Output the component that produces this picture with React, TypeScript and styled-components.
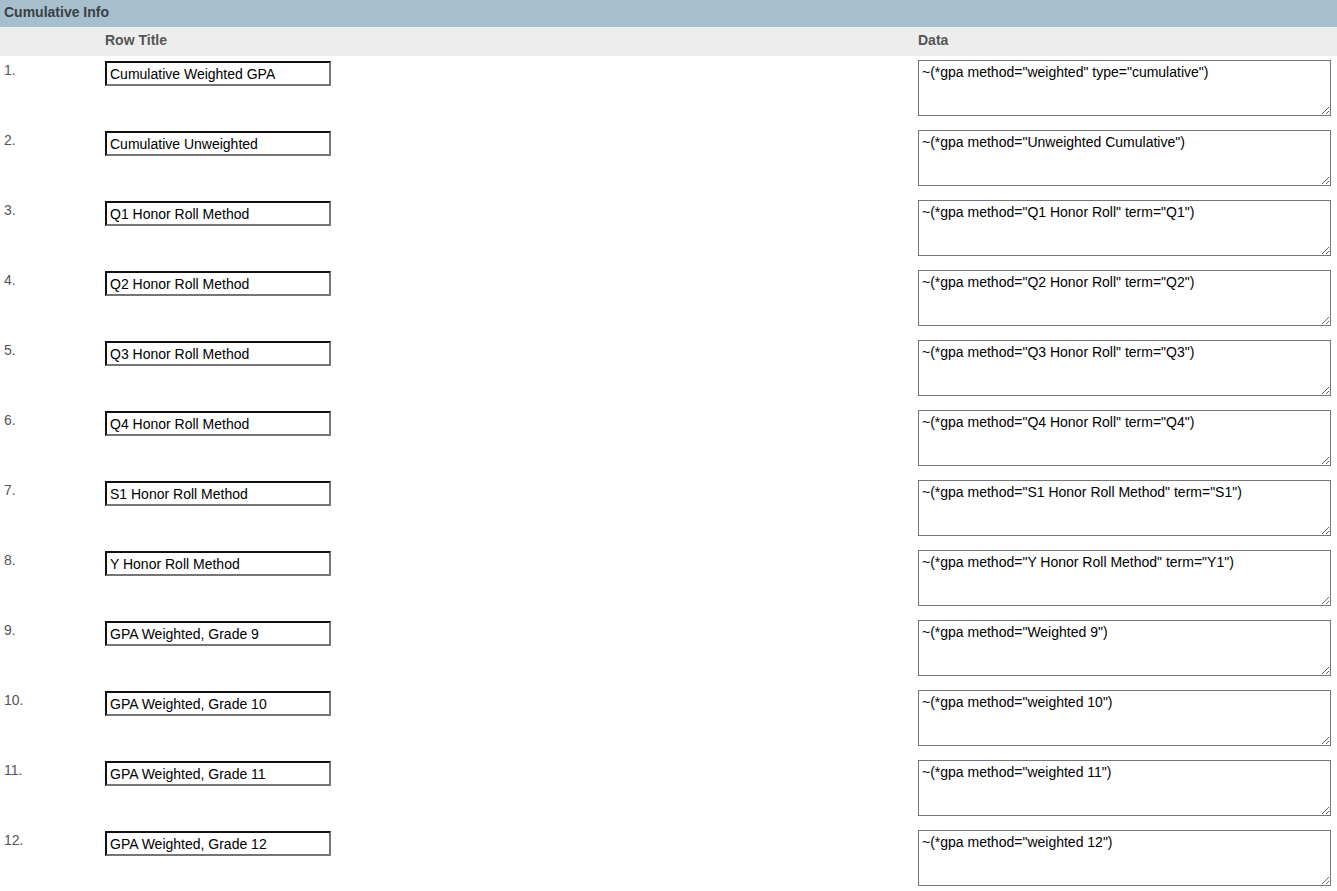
import React from "react";
import styled, { createGlobalStyle } from "styled-components";

const Global = createGlobalStyle`
  html, body { margin: 0; padding: 0; background: #fff; }
  body { font-family: Arial, "Liberation Sans", Helvetica, sans-serif; font-size: 14px; color: #333; }
`;

const Section = styled.section`
  width: 1337px;
`;

const TitleBar = styled.div`
  height: 27px;
  box-sizing: border-box;
  padding: 4px 4px 0;
  background: #a7bfcc;
  font-weight: bold;
  font-size: 14px;
  line-height: 17px;
  color: #3a3f44;
`;

const Grid = styled.div`
  display: grid;
  grid-template-columns: 105px 813px 1fr;
`;

const HeadCell = styled.div`
  height: 29px;
  background: #ededed;
  font-weight: bold;
  font-size: 14px;
  line-height: 27px;
  color: #555;
`;

const NumCell = styled.div`
  height: 70px;
  box-sizing: border-box;
  padding: 6px 0 0 4px;
  font-size: 14px;
  line-height: 16px;
  color: #555;
`;

const Cell = styled.div`
  height: 70px;
  box-sizing: border-box;
  padding-top: 4px;
`;

const TitleInput = styled.input`
  display: block;
  margin: 1px 0 0;
  width: 226px;
  height: 25px;
  box-sizing: border-box;
  padding: 0 3px;
  border-width: 2px;
  border-style: solid;
  border-color: #111 #767676 #767676 #111;
  font-family: Arial, "Liberation Sans", Helvetica, sans-serif;
  font-size: 14px;
  color: #000;
  background: #fff;
  outline: none;
`;

const DataArea = styled.textarea`
  display: block;
  margin: 0;
  width: 413px;
  height: 56px;
  box-sizing: border-box;
  padding: 3px 3px 2px;
  border: 1px solid #767676;
  font-family: Arial, "Liberation Sans", Helvetica, sans-serif;
  font-size: 14px;
  line-height: 16px;
  color: #000;
  background: #fff;
  outline: none;
`;

const rows: [string, string][] = [
  ["Cumulative Weighted GPA", '~(*gpa method="weighted" type="cumulative")'],
  ["Cumulative Unweighted", '~(*gpa method="Unweighted Cumulative")'],
  ["Q1 Honor Roll Method", '~(*gpa method="Q1 Honor Roll" term="Q1")'],
  ["Q2 Honor Roll Method", '~(*gpa method="Q2 Honor Roll" term="Q2")'],
  ["Q3 Honor Roll Method", '~(*gpa method="Q3 Honor Roll" term="Q3")'],
  ["Q4 Honor Roll Method", '~(*gpa method="Q4 Honor Roll" term="Q4")'],
  ["S1 Honor Roll Method", '~(*gpa method="S1 Honor Roll Method" term="S1")'],
  ["Y Honor Roll Method", '~(*gpa method="Y Honor Roll Method" term="Y1")'],
  ["GPA Weighted, Grade 9", '~(*gpa method="Weighted 9")'],
  ["GPA Weighted, Grade 10", '~(*gpa method="weighted 10")'],
  ["GPA Weighted, Grade 11", '~(*gpa method="weighted 11")'],
  ["GPA Weighted, Grade 12", '~(*gpa method="weighted 12")'],
];

export default function App() {
  return (
    <Section>
      <Global />
      <TitleBar>Cumulative Info</TitleBar>
      <Grid>
        <HeadCell />
        <HeadCell>Row Title</HeadCell>
        <HeadCell>Data</HeadCell>
        {rows.map(([title, data], i) => (
          <React.Fragment key={i}>
            <NumCell>{i + 1}.</NumCell>
            <Cell>
              <TitleInput defaultValue={title} />
            </Cell>
            <Cell>
              <DataArea defaultValue={data} />
            </Cell>
          </React.Fragment>
        ))}
      </Grid>
    </Section>
  );
}
